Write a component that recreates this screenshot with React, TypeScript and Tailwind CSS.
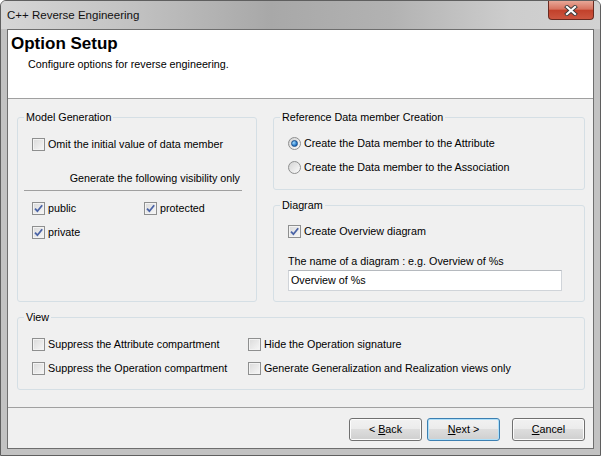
import type { ReactNode } from "react";

function CheckBox({ checked, label }: { checked?: boolean; label: string }) {
  return (
    <label className="flex h-[13px] items-center gap-[3px] whitespace-nowrap">
      <span className="flex h-[13px] w-[13px] shrink-0 items-center justify-center border border-[#8e8f8f] bg-[linear-gradient(135deg,#dadada,#f7f7f7)] shadow-[inset_0_0_0_1px_#f3f3f3]">
        {checked && (
          <svg width="9" height="9" viewBox="0 0 9 9">
            <path d="M1 4.6 L3.4 7.2 L8.2 1.2" fill="none" stroke="#4a63a6" strokeWidth="1.8" />
          </svg>
        )}
      </span>
      <span>{label}</span>
    </label>
  );
}

function Radio({ checked, label }: { checked?: boolean; label: string }) {
  return (
    <label className="flex h-[13px] items-center gap-[3px] whitespace-nowrap">
      <span className="flex h-[13px] w-[13px] shrink-0 items-center justify-center rounded-full border border-[#8e8f8f] bg-[linear-gradient(135deg,#d4d4d4,#fbfbfb)]">
        {checked && (
          <span className="h-[7px] w-[7px] rounded-full border border-[#1c4f8a] bg-[radial-gradient(circle_at_35%_35%,#9fdcff,#1a6cc0_70%)]" />
        )}
      </span>
      <span>{label}</span>
    </label>
  );
}

function Group({ title, className, children }: { title: string; className?: string; children: ReactNode }) {
  return (
    <fieldset className={`rounded-[3px] border border-[#d5dfe5] ${className ?? ""}`}>
      <legend className="ml-[6px] px-[2px] leading-[14px]">{title}</legend>
      <div className="pl-[14px]">{children}</div>
    </fieldset>
  );
}

function Button({ children, primary }: { children: ReactNode; primary?: boolean }) {
  return (
    <button
      className={`h-[23px] w-[73px] rounded-[3px] border bg-[linear-gradient(180deg,#f2f2f2_0%,#ebebeb_50%,#dddddd_50%,#cfcfcf_100%)] ${
        primary ? "border-[#3c7fb1] shadow-[inset_0_0_0_1px_#aee0fa]" : "border-[#707070] shadow-[inset_0_0_0_1px_#fcfcfc]"
      }`}
    >
      {children}
    </button>
  );
}

export default function App() {
  return (
    <div className="h-[456px] w-[601px] bg-white font-['Liberation_Sans',Arial,sans-serif] text-[10.75px] leading-[13px] text-black">
      <div className="flex h-full w-full flex-col rounded-t-[6px] border border-[#5f5f5f] bg-[#c2c2c2]">
        {/* Title bar */}
        <div className="flex h-[28px] items-start justify-between rounded-t-[5px] bg-[linear-gradient(90deg,#d6d6d6,#c4c4c4_20%,#a8a8a8_45%,#b2b2b2_65%,#cdcdcd_85%,#d2d2d2)]">
          <span className="pl-[6px] pt-[8px] text-[11.5px] text-[#111]">C++ Reverse Engineering</span>
          <div className="mr-[6px] flex h-[19px] w-[46px] items-center justify-center rounded-b-[4px] border border-t-0 border-[#6a2a20] bg-[linear-gradient(180deg,#e8a797_0%,#d7735f_45%,#c2412b_52%,#cc5640_100%)]">
            <svg width="14" height="11" viewBox="0 0 14 11">
              <path d="M3 2 L11 9 M11 2 L3 9" stroke="#3a3a3a" strokeWidth="4" strokeLinecap="square" />
              <path d="M3 2 L11 9 M11 2 L3 9" stroke="#ffffff" strokeWidth="2.2" strokeLinecap="square" />
            </svg>
          </div>
        </div>

        {/* Client area */}
        <div className="mx-[6px] flex h-[420px] flex-col border border-[#6e6e6e] bg-[#f0f0f0]">
          {/* Header */}
          <div className="h-[68px] bg-white pl-[3px] pt-[4px]">
            <div className="text-[17px] font-bold leading-[20px]">Option Setup</div>
            <div className="mt-[4px] pl-[17px]">Configure options for reverse engineering.</div>
          </div>
          <div className="h-px bg-[#a0a0a0]" />

          {/* Body */}
          <div className="flex-1 pl-[9px] pr-[8px] pt-[11px]">
            <div className="flex gap-[16px]">
              <Group title="Model Generation" className="w-[240px]">
                <div className="mt-[14px]">
                  <CheckBox label="Omit the initial value of data member" />
                </div>
                <div className="-ml-[8px] mt-[21px] w-[218px] pr-[2px] text-right">Generate the following visibility only</div>
                <div className="-ml-[8px] mt-[5px] h-px w-[218px] bg-[#a0a0a0]" />
                <div className="mt-[11px] grid grid-cols-[112px_1fr] gap-y-[11px]">
                  <CheckBox checked label="public" />
                  <CheckBox checked label="protected" />
                  <CheckBox checked label="private" />
                </div>
              </Group>

              <div className="flex w-[312px] flex-col gap-[8px]">
                <Group title="Reference Data member Creation" className="pb-[15px]">
                  <div className="mt-[13px] flex flex-col gap-[11px]">
                    <Radio checked label="Create the Data member to the Attribute" />
                    <Radio label="Create the Data member to the Association" />
                  </div>
                </Group>
                <Group title="Diagram" className="pb-[10px]">
                  <div className="mt-[13px]">
                    <CheckBox checked label="Create Overview diagram" />
                  </div>
                  <div className="mt-[17px]">The name of a diagram : e.g. Overview of %s</div>
                  <div className="mt-[2px] flex h-[21px] w-[274px] items-center border border-[#d0d4d9] border-t-[#b5b9be] bg-white pl-[2px]">
                    Overview of %s
                  </div>
                </Group>
              </div>
            </div>

            <Group title="View" className="mt-[8px] pb-[14px]">
              <div className="mt-[14px] grid grid-cols-[216px_1fr] gap-y-[11px]">
                <CheckBox label="Suppress the Attribute compartment" />
                <CheckBox label="Hide the Operation signature" />
                <CheckBox label="Suppress the Operation compartment" />
                <CheckBox label="Generate Generalization and Realization views only" />
              </div>
            </Group>
          </div>

          {/* Footer */}
          <div className="flex h-[41px] justify-end border-t border-[#a0a0a0] pr-[8px] pt-[10px]">
            <Button>
              &lt; <u>B</u>ack
            </Button>
            <div className="ml-[5px]">
              <Button primary>
                <u>N</u>ext &gt;
              </Button>
            </div>
            <div className="ml-[12px]">
              <Button>
                <u>C</u>ancel
              </Button>
            </div>
          </div>
        </div>
      </div>
    </div>
  );
}
